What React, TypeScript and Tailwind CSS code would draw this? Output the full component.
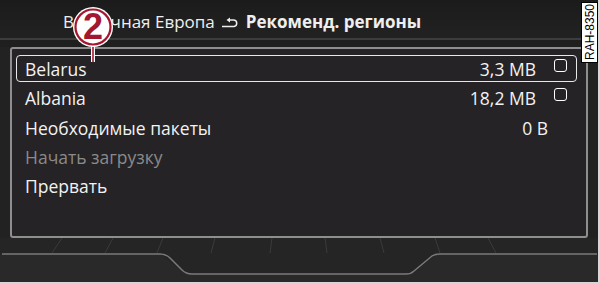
import React from "react";

function Checkbox() {
  return <div className="w-[13px] h-[13px] rounded-[3px] border-[1.5px] border-white -mt-[6px]" />;
}

function Row({
  label,
  value,
  selected,
  checkbox,
  dim,
  valuePad,
}: {
  label: string;
  value?: string;
  selected?: boolean;
  checkbox?: boolean;
  dim?: boolean;
  valuePad?: string;
}) {
  return (
    <div
      className={
        "h-[27px] mb-[2.4px] flex items-center pl-[8px] pr-[9px] rounded-[4px] border-[1.5px] " +
        (selected ? "border-[#e8e8e8]" : "border-transparent")
      }
    >
      <span className={"flex-1 pt-[1px] " + (dim ? "text-[#8a8a8a]" : "text-[#f2f2f2]")}>{label}</span>
      {value && <span className={"pt-[1px] text-[#f2f2f2] " + (valuePad ?? "")}>{value}</span>}
      {checkbox && (
        <div className="ml-[18px] flex items-center">
          <Checkbox />
        </div>
      )}
    </div>
  );
}

export default function App() {
  const leftDiv = [
    [62, 52],
    [113, 105],
    [163, 157],
    [215, 211],
    [272, 270],
  ];
  const rightDiv = [
    [325, 327],
    [380, 384],
    [435, 440],
    [488, 496],
  ];
  return (
    <div
      className="relative w-[600px] h-[283px] overflow-hidden bg-[#232223] border-r-[2px] border-b-[1px] border-[#d8d8d8]"
      style={{ fontFamily: '"Open Sans", "DejaVu Sans", sans-serif' }}
    >
      {/* Header */}
      <div className="h-[38px] bg-gradient-to-b from-[#1b1b1b] to-[#222] flex items-end justify-start pl-[63px] pb-[4px] text-[17px] text-[#efefef]">
        <span>Восточная Европа</span>
        <span className="mx-[6px] mb-[5px]">
          <svg width="19" height="12" viewBox="0 0 19 12">
            <path d="M1 9.5 H13 A3.3 3.3 0 0 0 13 3 H8" fill="none" stroke="#eee" strokeWidth="1.5" />
            <path d="M9 0.5 L5.5 3 L9 5.5 Z" fill="#eee" />
          </svg>
        </span>
        <span className="font-bold">Рекоменд. регионы</span>
      </div>
      <div className="h-[2px] bg-[#3d3d3d]" />
      <div className="h-[7px] bg-[#1f1f1f]" />

      {/* Panel */}
      <div className="mx-[10px] h-[191px] border-2 border-[#8e8e8e] rounded-[3px] bg-[#252325] pt-[6px] pl-[4px] pr-[9px] text-[17.5px]">
        <Row label="Belarus" value="3,3 MB" selected checkbox />
        <Row label="Albania" value="18,2 MB" checkbox />
        <Row label="Необходимые пакеты" value="0 B" valuePad="mr-[19px]" />
        <Row label="Начать загрузку" dim />
        <Row label="Прервать" />
      </div>

      {/* Bottom decoration */}
      <svg width="600" height="46" viewBox="0 0 600 46" className="block">
        <rect x="0" y="0" width="600" height="46" fill="#262526" />
        <path d="M0 16 H160 L186 36 H412 L437 16 H600 V46 H0 Z" fill="#2a292a" />
        {leftDiv.map(([a, b], i) => (
          <line key={"l" + i} x1={a} y1={0} x2={b} y2={15} stroke="#3b3b3b" strokeWidth="1" />
        ))}
        {rightDiv.map(([a, b], i) => (
          <line key={"r" + i} x1={a} y1={0} x2={b} y2={15} stroke="#3b3b3b" strokeWidth="1" />
        ))}
        <path d="M2 16 H160 Q166 16 170 20 L182 32 Q186 36 192 36 H406 Q411 36 414 33 L432 18 Q435 16 440 16 H597" fill="none" stroke="#7a7a7a" strokeWidth="1.5" />
      </svg>

      {/* Callout 2 */}
      <div className="absolute left-[72px] top-[6px] w-[42px] h-[60px]">
        <svg width="42" height="60" viewBox="0 0 42 60" className="absolute left-0 top-0">
          <line x1="21" y1="38" x2="21" y2="56" stroke="#fff" strokeWidth="4" />
          <line x1="21" y1="38" x2="21" y2="56" stroke="#a3182f" strokeWidth="1.6" />
          <circle cx="21" cy="21" r="20" fill="#fff" />
          <circle cx="21" cy="21" r="17.5" fill="#fff" stroke="#a3182f" strokeWidth="2.2" />
        </svg>
        <div
          className="absolute left-0 top-[1px] w-[42px] text-center text-[36px] leading-[40px] font-bold text-[#a3182f]"
          style={{ fontFamily: '"Liberation Sans", Arial, sans-serif' }}
        >
          2
        </div>
      </div>

      {/* RAH label */}
      <div className="absolute left-[581px] top-[2px] w-[17px] h-[61px] bg-white border border-black flex items-center justify-center">
        <span
          className="text-[12px] leading-none text-black"
          style={{ writingMode: "vertical-rl", transform: "rotate(180deg)", fontFamily: '"Liberation Sans", Arial, sans-serif' }}
        >
          RAH-8350
        </span>
      </div>
    </div>
  );
}
